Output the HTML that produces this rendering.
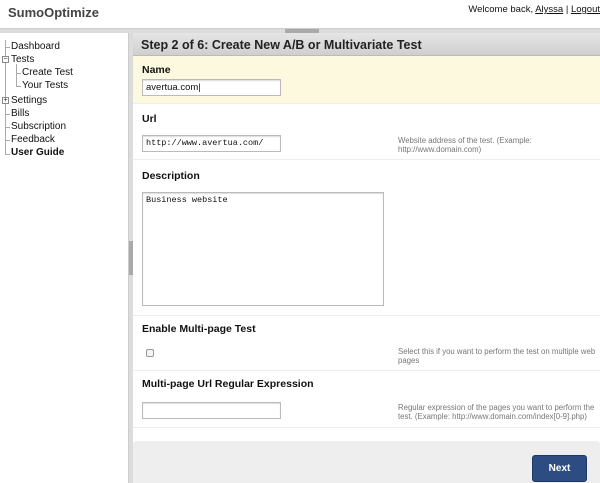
<!DOCTYPE html>
<html><head><style>
*{margin:0;padding:0;box-sizing:border-box}
body{width:600px;height:483px;overflow:hidden;background:#fff;font-family:"Liberation Sans",Arial,sans-serif;position:relative;font-size:11px;color:#111}
.a{position:absolute}
.lbl{font-weight:bold;font-size:10.5px;color:#111}
.inp{position:absolute;border:1px solid #bbb;background:#fff;height:17px;font-size:9.5px;padding:2px 3px;box-shadow:inset 0 1px 1px #ddd}
.help{position:absolute;left:398px;font-size:7.8px;color:#777;line-height:9px;white-space:nowrap}
.sec{position:absolute;left:133px;right:0;border-bottom:1px solid #eee}
.nav div{position:absolute;font-size:10px;color:#111}
.ln{position:absolute;background:#aaa}
</style></head><body>
<div class="a" style="left:8px;top:5px;font-size:13px;font-weight:bold;color:#444">SumoOptimize</div>
<div class="a" style="right:0;top:4px;font-size:9.5px;color:#111">Welcome back, <u>Alyssa</u> | <u>Logout</u></div>
<div class="a" style="left:0;top:28px;width:600px;height:5px;background:#dcdcdc;border-top:1px solid #ccc"></div>
<div class="a" style="left:285px;top:29px;width:34px;height:4px;background:#aaa"></div>
<div class="a" style="left:128px;top:33px;width:5px;height:450px;background:#dcdcdc;border-left:1px solid #ccc"></div>
<div class="a" style="left:129px;top:241px;width:4px;height:34px;background:#aaa"></div>
<div class="nav">
<div class="ln" style="left:5px;top:40px;width:1px;height:115px"></div>
<div class="ln" style="left:5px;top:47px;width:5px;height:1px"></div>
<div style="left:11px;top:41px">Dashboard</div>
<div class="a" style="left:2px;top:56px;width:7px;height:7px;border:1px solid #888;background:#fff;font-size:7px;line-height:5px;text-align:center">−</div>
<div style="left:11px;top:54px">Tests</div>
<div class="ln" style="left:16px;top:64px;width:1px;height:23px"></div>
<div class="ln" style="left:16px;top:73px;width:5px;height:1px"></div>
<div class="ln" style="left:16px;top:86px;width:5px;height:1px"></div>
<div style="left:22px;top:67px">Create Test</div>
<div style="left:22px;top:80px">Your Tests</div>
<div class="a" style="left:2px;top:97px;width:7px;height:7px;border:1px solid #888;background:#fff;font-size:7px;line-height:5px;text-align:center">+</div>
<div style="left:11px;top:95px">Settings</div>
<div class="ln" style="left:5px;top:114px;width:5px;height:1px"></div>
<div class="ln" style="left:5px;top:127px;width:5px;height:1px"></div>
<div class="ln" style="left:5px;top:140px;width:5px;height:1px"></div>
<div class="ln" style="left:5px;top:154px;width:5px;height:1px"></div>
<div style="left:11px;top:108px">Bills</div>
<div style="left:11px;top:121px">Subscription</div>
<div style="left:11px;top:134px">Feedback</div>
<div style="left:11px;top:147px;font-weight:bold">User Guide</div>
</div>
<div class="a" style="left:133px;top:33px;right:0;height:23px;background:linear-gradient(#e6e6e6,#cfcfcf);border-bottom:1px solid #bbb"></div>
<div class="a" style="left:141px;top:38px;font-size:12.5px;font-weight:bold;color:#222">Step 2 of 6: Create New A/B or Multivariate Test</div>
<div class="sec" style="top:56px;height:48px;background:#fdf9df"></div>
<div class="a lbl" style="left:142px;top:64px">Name</div>
<div class="inp" style="left:142px;top:79px;width:139px">avertua.com|</div>
<div class="sec" style="top:104px;height:56px"></div>
<div class="a lbl" style="left:142px;top:113px">Url</div>
<div class="inp" style="left:142px;top:135px;width:139px;font-family:'Liberation Mono',monospace;font-size:8.5px">http://www.avertua.com/</div>
<div class="help" style="top:136px">Website address of the test. (Example:<br>http://www.domain.com)</div>
<div class="sec" style="top:160px;height:156px"></div>
<div class="a lbl" style="left:142px;top:170px">Description</div>
<div class="inp" style="left:142px;top:192px;width:242px;height:114px;font-family:'Liberation Mono',monospace;font-size:8.5px">Business website</div>
<div class="sec" style="top:316px;height:55px"></div>
<div class="a lbl" style="left:142px;top:323px">Enable Multi-page Test</div>
<div class="a" style="left:146px;top:349px;width:8px;height:8px;border:1px solid #999;border-radius:2px;background:#f4f4f4"></div>
<div class="help" style="top:347px">Select this if you want to perform the test on multiple web<br>pages</div>
<div class="sec" style="top:371px;height:57px"></div>
<div class="a lbl" style="left:142px;top:378px">Multi-page Url Regular Expression</div>
<div class="inp" style="left:142px;top:402px;width:139px"></div>
<div class="help" style="top:403px">Regular expression of the pages you want to perform the<br>test. (Example: http://www.domain.com/index[0-9].php)</div>
<div class="a" style="left:133px;top:441px;right:0;height:42px;background:#eee;border-radius:4px 4px 0 0"></div>
<div class="a" style="left:532px;top:455px;width:55px;height:27px;background:#2c4c82;border:1px solid #1d3766;border-radius:3px;color:#fff;font-weight:bold;font-size:10px;text-align:center;line-height:25px">Next</div>
</body></html>
